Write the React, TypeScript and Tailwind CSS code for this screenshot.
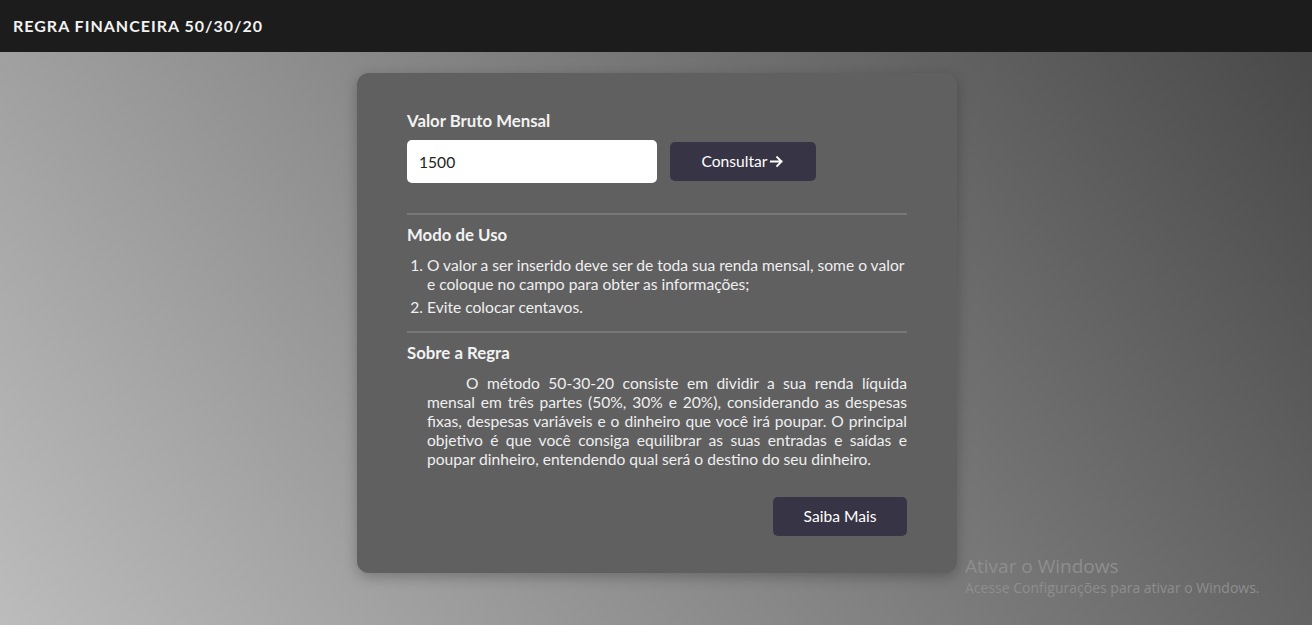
import React, { useState } from 'react';

const Header = () => (
  <header className="h-[52px] shrink-0 bg-[#1c1c1c] flex items-center px-[13px]">
    <h1 className="text-[16px] font-bold tracking-[1px] text-[#f2f2f2]">REGRA FINANCEIRA 50/30/20</h1>
  </header>
);

const ArrowIcon = () => (
  <svg xmlns="http://www.w3.org/2000/svg" className="h-[15px] w-[15px]" viewBox="0 0 24 24" fill="none" stroke="currentColor" strokeWidth="3" strokeLinecap="square">
    <path d="M3 12h17M13 5l7 7-7 7" />
  </svg>
);

const App: React.FC = () => {
  const [valor, setValor] = useState('1500');

  return (
    <div className="min-h-[625px] flex flex-col font-['Lato',sans-serif] relative overflow-hidden">
      <Header />

      <main className="flex-1 flex justify-center pt-[21px] pl-[2px] bg-[linear-gradient(54deg,#bcbcbc,#494949)]">
        <div className="w-[600px] h-[500px] bg-[#606060] rounded-[12px] shadow-[0_4px_14px_rgba(0,0,0,0.25)] px-[50px] pt-[38px] text-[#f2f2f2]">
          {/* Form */}
          <label className="block text-[16.8px] font-bold leading-[20px] mb-[9px]">Valor Bruto Mensal</label>
          <div className="flex items-center gap-[13px]">
            <input
              type="text"
              value={valor}
              onChange={(e) => setValor(e.target.value)}
              className="w-[250px] h-[43px] rounded-[5px] bg-white px-[12px] text-[15.6px] text-[#222] outline-none"
            />
            <button className="w-[146px] h-[39px] rounded-[5px] bg-[#373545] text-[15.6px] text-white flex items-center justify-center gap-[2px]">
              Consultar<ArrowIcon />
            </button>
          </div>

          <hr className="mt-[30px] border-0 h-[2px] bg-[#787878]" />

          {/* Modo de uso */}
          <h2 className="mt-[10px] text-[16.8px] font-bold leading-[20px]">Modo de Uso</h2>
          <ol className="mt-[11px] list-decimal pl-[20px] text-[15.6px] leading-[19px] text-[#efefef]">
            <li className="mb-[4px]">O valor a ser inserido deve ser de toda sua renda mensal, some o valor e coloque no campo para obter as informações;</li>
            <li>Evite colocar centavos.</li>
          </ol>

          <hr className="mt-[14px] border-0 h-[2px] bg-[#787878]" />

          {/* Sobre a regra */}
          <h2 className="mt-[10px] text-[16.8px] font-bold leading-[20px]">Sobre a Regra</h2>
          <p className="mt-[11px] ml-[20px] text-[15.6px] leading-[19px] text-justify indent-[39px] text-[#efefef]">
            O método 50-30-20 consiste em dividir a sua renda líquida mensal em três partes (50%, 30% e 20%), considerando as despesas fixas, despesas variáveis e o dinheiro que você irá poupar. O principal objetivo é que você consiga equilibrar as suas entradas e saídas e poupar dinheiro, entendendo qual será o destino do seu dinheiro.
          </p>

          <div className="flex justify-end mt-[28px]">
            <button className="w-[134px] h-[39px] rounded-[5px] bg-[#373545] text-[15.6px] text-white">Saiba Mais</button>
          </div>
        </div>
      </main>

      {/* watermark */}
      <div className="absolute left-[965px] top-[554px] font-['Open_Sans',sans-serif] text-[#8e8e8e] pointer-events-none">
        <div className="text-[19px] leading-[24px]">Ativar o Windows</div>
        <div className="text-[14px] leading-[18px] mt-[1px]">Acesse Configurações para ativar o Windows.</div>
      </div>
    </div>
  );
};

export default App;
